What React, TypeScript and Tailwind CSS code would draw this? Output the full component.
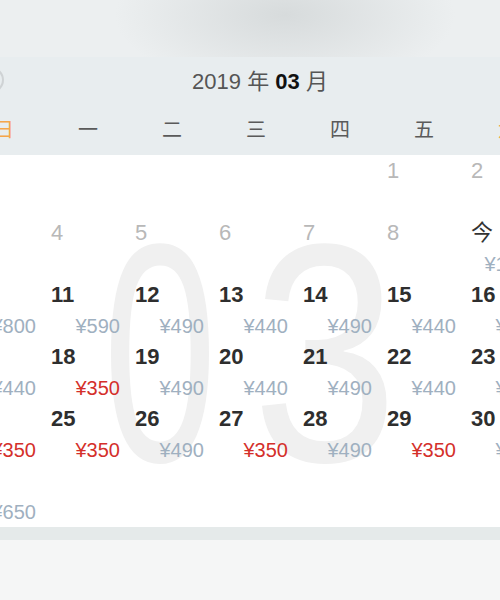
import React from "react";

type Cell = { d?: number; label?: string; past?: boolean; price?: string; red?: boolean };

const rows: Cell[][] = [
  [{}, {}, {}, {}, {}, { d: 1, past: true }, { d: 2, past: true }],
  [
    { d: 3, past: true },
    { d: 4, past: true },
    { d: 5, past: true },
    { d: 6, past: true },
    { d: 7, past: true },
    { d: 8, past: true },
    { d: 9, label: "今", price: "¥1050" },
  ],
  [
    { d: 10, price: "¥800" },
    { d: 11, price: "¥590" },
    { d: 12, price: "¥490" },
    { d: 13, price: "¥440" },
    { d: 14, price: "¥490" },
    { d: 15, price: "¥440" },
    { d: 16, price: "¥490" },
  ],
  [
    { d: 17, price: "¥440" },
    { d: 18, price: "¥350", red: true },
    { d: 19, price: "¥490" },
    { d: 20, price: "¥440" },
    { d: 21, price: "¥490" },
    { d: 22, price: "¥440" },
    { d: 23, price: "¥490" },
  ],
  [
    { d: 24, price: "¥350", red: true },
    { d: 25, price: "¥350", red: true },
    { d: 26, price: "¥490" },
    { d: 27, price: "¥350", red: true },
    { d: 28, price: "¥490" },
    { d: 29, price: "¥350", red: true },
    { d: 30, price: "¥490" },
  ],
  [{ d: 31, price: "¥650" }, {}, {}, {}, {}, {}, {}],
];

const weekdays = ["日", "一", "二", "三", "四", "五", "六"];

function DayCell({ c }: { c: Cell }) {
  return (
    <div className="h-[62px] flex flex-col">
      <div
        className={
          "pl-[5px] pt-[5px] h-[27px] text-[22px] leading-[22px] " +
          (c.label
            ? "text-[#333333] font-normal"
            : c.past
            ? "text-[#b8b8b8] font-normal"
            : "text-[#2e2e2e] font-bold")
        }
      >
        {c.label ?? c.d ?? ""}
      </div>
      {c.price && (
        <div
          className={
            "mt-[10px] pr-[10px] text-right text-[20px] leading-[20px] " +
            (c.red ? "text-[#d42f2a]" : "text-[#9fb0c0]")
          }
        >
          {c.price}
        </div>
      )}
    </div>
  );
}

export default function App() {
  return (
    <div
      className="relative w-[500px] h-[600px] overflow-hidden bg-[#f5f6f6]"
      style={{ fontFamily: '"Liberation Sans", "Noto Sans CJK SC", sans-serif' }}
    >
      <div className="h-[57px] bg-[radial-gradient(ellipse_170px_75px_at_285px_15px,#d7dbdc,#eceff0)]" />
      <div className="bg-[#e8edef]">
        <div className="relative h-[48px] flex items-center justify-center pl-[20px] text-[22px] text-[#555555]">
          <div className="absolute left-[-22px] top-[10px] w-[26px] h-[26px] rounded-full border-2 border-[#cfd3d5]" />
          <span>
            2019 年 <b className="text-[#111111]">03</b> 月
          </span>
        </div>
        <div className="ml-[-38px] w-[588px] grid grid-cols-7 h-[50px] items-center">
          {weekdays.map((w, i) => (
            <div
              key={w}
              className={
                "text-center text-[20px] " +
                (i === 0 || i === 6 ? "text-[#f5a64a]" : "text-[#5a5a5a]")
              }
            >
              {w}
            </div>
          ))}
        </div>
      </div>
      <div className="relative bg-white h-[372px]">
        <svg
          className="absolute left-0 top-0 select-none"
          width="500"
          height="372"
          viewBox="0 0 500 372"
        >
          <g
            fill="#f0f0f0"
            fontFamily="'Liberation Sans', Arial, sans-serif"
            fontSize="312"
          >
            <text x="103" y="306" textLength="114" lengthAdjust="spacingAndGlyphs">
              0
            </text>
            <text x="252" y="306" textLength="146" lengthAdjust="spacingAndGlyphs">
              3
            </text>
          </g>
        </svg>
        <div className="relative ml-[-38px] w-[588px] grid grid-cols-7">
          {rows.map((r, ri) =>
            r.map((c, ci) => <DayCell key={ri + "-" + ci} c={c} />)
          )}
        </div>
      </div>
      <div className="h-[13px] bg-[#e5eaea]" />
    </div>
  );
}
